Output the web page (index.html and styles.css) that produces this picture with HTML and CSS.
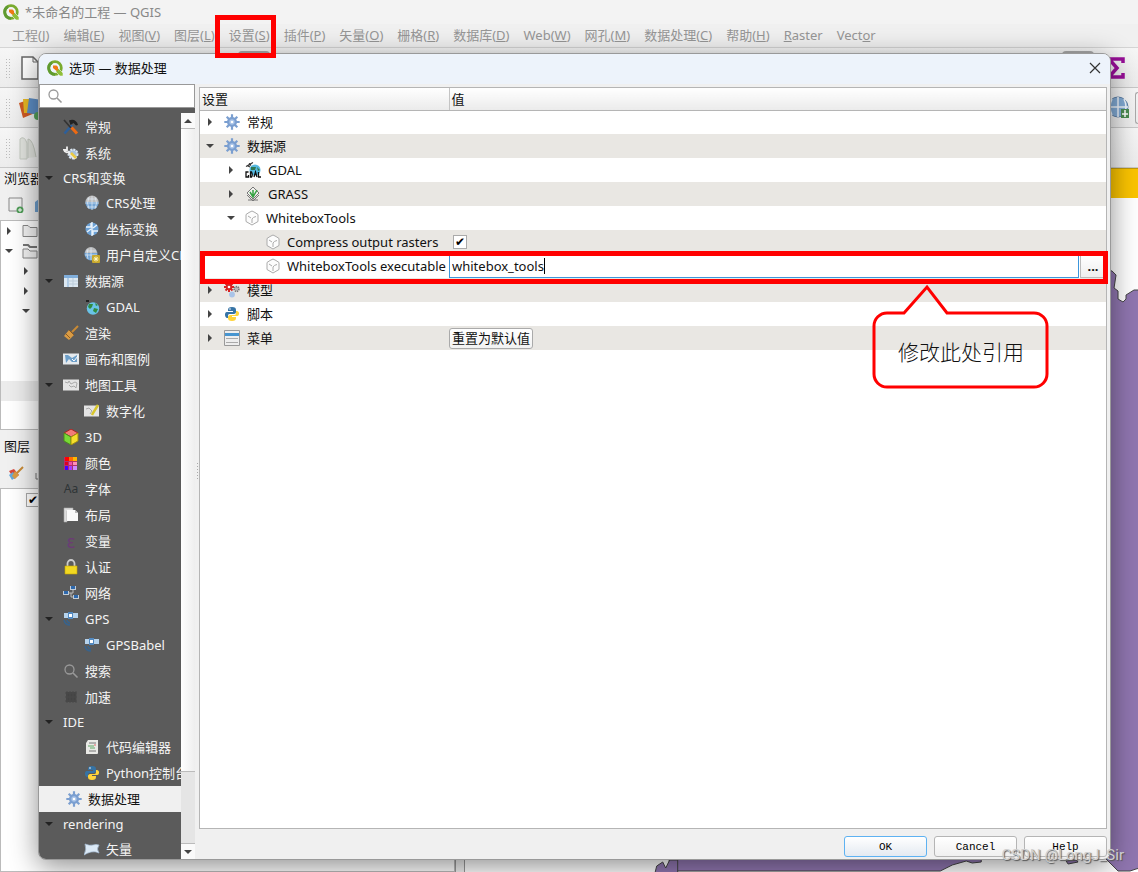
FILE: index.html
```
<!DOCTYPE html>
<html lang="zh-CN">
<head>
    <meta charset="UTF-8">
    <meta name="viewport" content="width=device-width, initial-scale=1.0">
    <title>选项 — 数据处理</title>
    <link rel="stylesheet" href="styles.css">
</head>
<body>
    <!-- shared icons -->
    <svg class="sprite" aria-hidden="true">
        <symbol id="qgis" viewBox="0 0 16 16"><circle cx="8" cy="8" r="6.300" fill="none" stroke="#7aab2e" stroke-width="2.800"/><path d="M8 14.300a6.300 6.300 0 0 1-3-11.800" fill="none" stroke="#5f9a30" stroke-width="2.800"/><path d="M9 9l2.500-.5L16 13v3h-3l-4-4z" fill="#8fbf3a" stroke="#f3f3f3" stroke-width=".6"/><path d="M6 5.500h3.500l1.500 1.500v3.500H9L6 8z" fill="#ee7913"/></symbol>
        <symbol id="down" viewBox="0 0 10 10"><path d="M1 3h8L5 7z" fill="currentColor"/></symbol>
        <symbol id="right" viewBox="0 0 10 10"><path d="M3 1v8l4-4z" fill="currentColor"/></symbol>
        <symbol id="search" viewBox="0 0 16 16"><circle cx="6.500" cy="6.500" r="4.500" fill="none" stroke="#999" stroke-width="1.300"/><path d="M10 10l4.500 4.500" stroke="#999" stroke-width="1.600"/></symbol>
        <symbol id="gear" viewBox="0 0 16 16"><g stroke="#7b9fd0" stroke-width="2.200"><path d="M8 0.300v15.400M0.300 8h15.400M2.700 2.700l10.600 10.600M13.300 2.700L2.700 13.300"/></g><circle cx="8" cy="8" r="5" fill="#7b9fd0"/><circle cx="8" cy="8" r="2.700" fill="#a9c4e8"/><circle cx="8" cy="8" r="1.300" fill="#fff"/></symbol>
        <symbol id="tools" viewBox="0 0 16 16"><path d="M1.500 14.500L9 6" stroke="#2d5f9a" stroke-width="2.600"/><path d="M6 1.500c4-2 8 0 9 4.500l-2 .5-2.500-2.500-3 2z" fill="#222"/><path d="M1 1l7 8" stroke="#333" stroke-width="1.600"/><path d="M8.500 8.500L14 14.500" stroke="#ee6a12" stroke-width="3"/></symbol>
        <symbol id="system" viewBox="0 0 16 16"><circle cx="10" cy="9" r="4.500" fill="#a8c1dc" stroke="#dce6f0" stroke-width="2" stroke-dasharray="2 1"/><path d="M4 1.500v3.500H1q1 3 4 2l7 7" fill="none" stroke="#eee" stroke-width="1.800"/><path d="M8 8l5 5" stroke="#e9c944" stroke-width="2.500"/></symbol>
        <symbol id="globe" viewBox="0 0 16 16"><circle cx="8" cy="8" r="6.500" fill="#74a5d5"/><path d="M1.500 7a6.500 6.500 0 0 1 13 0z" fill="#bdbdbd"/><path d="M1 8h14M3 4h10M3 12h10M8 1v14M5 2q-3 6 0 12M11 2q3 6 0 12" stroke="#e2edf6" stroke-width=".7" fill="none"/></symbol>
        <symbol id="transform" viewBox="0 0 16 16"><circle cx="8" cy="8" r="6.500" fill="#6da2d6"/><path d="M2 6h5V2M9 14v-4h5M8 1v14M3 11l4-3M9 7l4-3" stroke="#e8f2fb" stroke-width="1.400" fill="none"/></symbol>
        <symbol id="customcrs" viewBox="0 0 16 16"><circle cx="7" cy="7" r="6.500" fill="#74a5d5"/><path d="M1 6a6 6 0 0 1 12 0z" fill="#bdbdbd"/><path d="M1 8h12M2 4h10M7 1v12M4 2q-2 5 0 10" stroke="#e2edf6" stroke-width=".7" fill="none"/><rect x="8" y="8" width="8" height="8" rx="1" fill="#c8a92d"/><path d="M12 9.500v5M9.500 12h5M10.300 10.300l3.400 3.400M13.700 10.300l-3.400 3.400" stroke="#fff6bb"/></symbol>
        <symbol id="table" viewBox="0 0 16 16"><path d="M1 2h14v12H1z" fill="#dce8f2"/><path d="M1 2h14v3H1z" fill="#80aedb"/><path d="M5 5v9" stroke="#80aedb"/><path d="M10 5v9M5 8h10M5 11h10" stroke="#bccddb"/></symbol>
        <symbol id="earth" viewBox="0 0 16 16"><circle cx="9" cy="9.500" r="6.200" fill="#69c3e8"/><path d="M5 5l4 0-1 3-2 2-2-2zM10 9l4 1-2 4-3-2zM11 4l3 2-2 1z" fill="#328c3e"/><path d="M2 1h3v2H2z" fill="#222"/></symbol>
        <symbol id="brush" viewBox="0 0 16 16"><path d="M15 1L9 7" stroke="#c88a35" stroke-width="2"/><path d="M6 5l5 5-5 5-5-4z" fill="#d99b44"/><path d="M6 5l5 5M3 9l4 4" stroke="#8d5a20"/></symbol>
        <symbol id="canvas" viewBox="0 0 16 16"><path d="M0 2.500h16v11H0z" fill="#e4e9ed"/><path d="M2 4h3l4 3 5-3v7H9L6 8l-3 4z" fill="#6d9fc9"/><path d="M9 8l2 2 4-5" stroke="#fff" fill="none"/></symbol>
        <symbol id="maptool" viewBox="0 0 16 16"><path d="M0 2.500h16v11H0z" fill="#e4e4e4"/><path d="M2 5l3 1 1-2 2 3 4-2 2 1-1 5-2-2-3 1-2-2" fill="none" stroke="#aaa"/></symbol>
        <symbol id="digitize" viewBox="0 0 16 16"><path d="M0 2.500h15v11H0z" fill="#e4e4e4"/><path d="M2 6l3-1 3 3-2 3" fill="none" stroke="#aaa"/><path d="M14 2l-5 8-1 2" stroke="#d7c62c" stroke-width="2.500"/></symbol>
        <symbol id="cube3d" viewBox="0 0 16 16"><path d="M8 0l7 4-7 4-7-4z" fill="#f27b78" stroke="#a22"/><path d="M1 4l7 4v8l-7-4z" fill="#79d936" stroke="#4a8c1c"/><path d="M15 4L8 8v8l7-4z" fill="#f5df2b" stroke="#a28d10"/></symbol>
        <symbol id="colors" viewBox="0 0 16 16"><path d="M1 2h13v13H1z" fill="#b0306c"/><path d="M2 2h4v4H2z" fill="#f00"/><path d="M6 2h4v4H6z" fill="#ff6d00"/><path d="M10 2h4v4h-4z" fill="#ffb700"/><path d="M2 7h3v3H2z" fill="#d02"/><path d="M6 7h3v3H6z" fill="#f14da8"/><path d="M10 7h4v3h-4z" fill="#ff90b8"/><path d="M2 11h3v4H2z" fill="#40f"/><path d="M6 11h3v4H6z" fill="#a33cff"/><path d="M10 11h4v4h-4z" fill="#cd88ff"/></symbol>
        <symbol id="layout" viewBox="0 0 16 16"><path d="M1 1h9v3H4v11H1z" fill="#ddd" stroke="#aaa" stroke-width=".6"/><path d="M4 3h8l3 3v8H4z" fill="#fafafa"/><path d="M12 3v3h3z" fill="#bbb"/></symbol>
        <symbol id="lock" viewBox="0 0 16 16"><path d="M4.500 8V4.500a3.500 3.500 0 0 1 7 0V8" fill="none" stroke="#ccc" stroke-width="1.800"/><path d="M2 7h12v8H2z" fill="#f1d821" stroke="#caa900" stroke-width=".6"/></symbol>
        <symbol id="network" viewBox="0 0 16 16"><path d="M5 8h5V5M8 8v4h3" fill="none" stroke="#bbb"/><path d="M0 6h6v4H0zM7 1h6v4H7zM10 10h6v4h-6z" fill="#c2ccd6"/><path d="M1 6h4v3H1zM8 1h4v3H8zM11 10h4v3h-4z" fill="#2e69ad"/></symbol>
        <symbol id="gps" viewBox="0 0 16 16"><path d="M1 2h4v5H1zM9 2h6v5H9z" fill="#b6d3ed"/><path d="M5 1h5v7H5z" fill="#5288be"/><path d="M6 3h3v3H6z" fill="#fff"/><path d="M4 9q0 2 3 3M1 9q1 5 6 5" fill="none" stroke="#38638c" stroke-width="1.600"/></symbol>
        <symbol id="chip" viewBox="0 0 16 16"><path d="M3 3h10v10H3z" fill="#444"/><path d="M4 2v12M7 2v12M10 2v12M13 2v12M2 4h12M2 8h12M2 12h12" stroke="#4b4b4b"/></symbol>
        <symbol id="code" viewBox="0 0 16 16"><path d="M4 1h10v13q0 1-1 1H2V4z" fill="#e9e9e6"/><path d="M5 4h7M5 12h7" stroke="#777"/><path d="M4 7h6M6 9h5" stroke="#5ea764"/><path d="M10 6h2" stroke="#d66"/></symbol>
        <symbol id="python" viewBox="0 0 16 16"><path d="M8 1c-3 0-4 1-4 3v1h5v1H3C1 6 1 8 1 9s1 3 2 3h1v-2c0-2 1-2 3-2h3c1 0 2-1 2-2V4c0-2-1-3-4-3z" fill="#3673a5"/><path d="M8 15c3 0 4-1 4-3v-1H8v-1h5c2 0 2-2 2-3s-1-2-2-2h-1v2c0 2-1 2-3 2H6c-1 0-2 1-2 2v1c0 2 1 3 4 3z" fill="#ffd43b"/><circle cx="6" cy="3" r=".8" fill="#fff"/></symbol>
        <symbol id="vector" viewBox="0 0 16 16"><path d="M1 3q5 2 8 1t6 0q-3 4 0 8-4-2-8-1t-7 3q3-6 1-11z" fill="#dbe9f6" stroke="#a9c0d8" stroke-width=".7"/></symbol>
        <symbol id="gdal" viewBox="0 0 16 16"><circle cx="10" cy="8" r="5.500" fill="#55b8df"/><path d="M6 5l5 0-1 3H6zM12 5l3 3-2 1z" fill="#2e7650"/><path d="M1 4.500L8 .5M3 4l2 1M4 1.500l2 2" stroke="#333" stroke-width="1.200"/><path d="M3.500 10H1v5h2.500v-2M5.500 10v5h1q1.500-2 0-5zM9 15l1.500-5 1.500 5M13.500 10v5H16" fill="none" stroke="#111" stroke-width="1.300"/></symbol>
        <symbol id="grass" viewBox="0 0 16 16"><path d="M8 1l6 6-6 6-6-6z" fill="#f1f1ee" stroke="#777"/><path d="M2 9l6 6 6-6M3 14h10" fill="none" stroke="#777"/><path d="M5 6l3 5 4-7M8 4v7" fill="none" stroke="#35a143" stroke-width="1.500"/></symbol>
        <symbol id="box" viewBox="0 0 14 16"><path d="M4 2.500L7 1l3 1.500 3 2v7l-6 3.500-6-3.500v-7zM3 6l3 2M7 13V9q1-2 4-2.500" fill="#fcfcfc" stroke="#aaa"/></symbol>
        <symbol id="model" viewBox="0 0 16 16"><path d="M5 0v10M0 5h10M1.500 1.500l7 7M8.500 1.500l-7 7" stroke="#d62222" stroke-width="2"/><circle cx="5" cy="5" r="3.200" fill="#d62222"/><circle cx="5" cy="5" r="1.300" fill="#fff"/><circle cx="12.500" cy="7" r="2.400" fill="#bbb" stroke="#777" stroke-width="1.600" stroke-dasharray="1.200 .7"/><circle cx="8" cy="12.500" r="2.900" fill="#a9c4e8"/></symbol>
        <symbol id="menu" viewBox="0 0 16 16"><path d="M.5.500h15v15H.5z" fill="#eee" stroke="#999"/><path d="M1 3h14v3H1z" fill="#4795d0"/><path d="M2 8.500h12M2 12.500h12" stroke="#aaa"/></symbol>
        <symbol id="folder" viewBox="0 0 16 16"><path d="M1 2.500h5l2 2h7v9H1z" fill="#f4f4f4" stroke="#888"/></symbol>
        <symbol id="folders" viewBox="0 0 16 16"><path d="M1 2h5l2 2h7" fill="none" stroke="#777" stroke-width="2"/><path d="M1 6h5l2 2h7v7H1z" fill="#f4f4f4" stroke="#888"/></symbol>
    </svg>

    <div class="window">
        <header class="titlebar"><svg class="logo"><use href="#qgis"/></svg>*未命名的工程 — QGIS</header>
        <nav class="menubar">
            <button>工程(<u>J</u>)</button>
            <button>编辑(<u>E</u>)</button>
            <button>视图(<u>V</u>)</button>
            <button>图层(<u>L</u>)</button>
            <button>设置(<u>S</u>)</button>
            <button>插件(<u>P</u>)</button>
            <button>矢量(<u>O</u>)</button>
            <button>栅格(<u>R</u>)</button>
            <button>数据库(<u>D</u>)</button>
            <button>Web(<u>W</u>)</button>
            <button>网孔(<u>M</u>)</button>
            <button>数据处理(<u>C</u>)</button>
            <button>帮助(<u>H</u>)</button>
            <button><u>R</u>aster</button>
            <button>Vect<u>o</u>r</button>
        </nav>
        <div class="toolbar">
            <span class="grip"></span>
            <svg class="tool" viewBox="0 0 24 24"><path d="M4 1h11l5 5v17H4z" fill="#fff" stroke="#666" stroke-width="1.500"/><path d="M15 1v5h5" fill="none" stroke="#666"/></svg>
            <span class="pressed first"></span>
            <span class="pressed last"></span>
            <svg class="tool sum" viewBox="0 0 24 24"><path d="M21 7V3H7l8 9-8 9h14v-4" fill="none" stroke="#990f99" stroke-width="3.500"/></svg>
        </div>
        <div class="toolbar">
            <span class="grip"></span>
            <svg class="tool" viewBox="0 0 24 24"><path d="M1 7l12-4 4 14-12 5z" fill="#cf5a24"/><path d="M5 3h13v14H6z" fill="#e7b925"/><path d="M11 2l13 2-2 15-13-2z" fill="#5e8fc7"/><circle cx="20" cy="20" r="4" fill="#55a35c"/></svg>
            <svg class="tool web" viewBox="0 0 24 24"><circle cx="11" cy="11" r="10" fill="#82abd5" stroke="#5e80a7"/><path d="M1 11h20M11 1v20M5 3q-4 8 0 16M17 3q4 8 0 16" stroke="#eef5fb" fill="none" stroke-width="1.500"/><path d="M14 13h8v9h-8z" fill="#4b8b52"/><path d="M18 14v7M15 18h6" stroke="#fff" stroke-width="1.500"/></svg>
            <span class="edge"></span>
        </div>
        <div class="toolbar">
            <span class="grip"></span>
            <svg class="tool" viewBox="0 0 24 24"><path d="M2 23V3q4-4 7 4v16zM10 22V3q5 0 8 18" fill="#e2e4df" stroke="#c5cac1"/></svg>
        </div>
        <div class="workspace">
            <aside class="docks">
                <h2>浏览器</h2>
                <div class="dock-tools">
                    <svg class="icon" viewBox="0 0 16 16"><path d="M1 1h13v13H1z" fill="none" stroke="#888"/><circle cx="12" cy="13" r="3.500" fill="#4f9c57"/><path d="M12 11v4M10 13h4" stroke="#fff"/></svg>
                    <svg class="icon" viewBox="0 0 16 16"><path d="M0 8q1-7 9-6M0 5l4-3v13H0z" fill="#6e9fce"/></svg>
                </div>
                <ul class="browser">
                    <li><svg class="caret"><use href="#right"/></svg><svg class="icon"><use href="#folder"/></svg></li>
                    <li><svg class="caret"><use href="#down"/></svg><svg class="icon"><use href="#folders"/></svg></li>
                    <li class="child"><svg class="caret"><use href="#right"/></svg></li>
                    <li class="child"><svg class="caret"><use href="#right"/></svg></li>
                    <li class="child"><svg class="caret"><use href="#down"/></svg></li>
                    <li></li><li></li><li></li>
                    <li class="current"></li>
                </ul>
                <h2>图层</h2>
                <div class="dock-tools">
                    <svg class="icon" viewBox="0 0 16 16"><path d="M1 6l5-2 5 6-5 4z" fill="#d8483b"/><path d="M1 10l4-3 3 5-4 3z" fill="#66a8da"/><path d="M15 2L9 8" stroke="#c88a35" stroke-width="2"/><path d="M7 6l4 4-4 4-3-3z" fill="#d99b44"/></svg>
                    <svg class="icon" viewBox="0 0 16 16"><path d="M1 8v6h8" fill="none" stroke="#777"/></svg>
                </div>
                <div class="layers"><input type="checkbox" aria-label="图层可见" checked></div>
            </aside>
            <main class="map">
                <div class="message"></div>
                <svg viewBox="464 198 674 674" preserveAspectRatio="none">
                    <path d="M1000 270h108l4 1 4 4-2 13 4 3v8l5 3 3-3v-4l8-5h6v578l-4 1-6 2h-12l-5-5-8-8-20-12H981v16l-9 1-6-2-14 4-12 6H672l-3-6-2-18h333z" fill="#9076b0" stroke="#444"/>
                    <path d="M654 874l2-8 6-4 3 6 4-8h8v14z" fill="#9076b0" stroke="#444"/>
                    <path d="M1066 861l10-1 2 2-10 2z" fill="#9076b0" stroke="#444"/>
                </svg>
            </main>
        </div>
    </div>

    <section class="dialog" role="dialog" aria-labelledby="dialog-title">
        <header class="dialog-title">
            <svg class="logo"><use href="#qgis"/></svg>
            <h1 id="dialog-title">选项 — 数据处理</h1>
            <button class="close" aria-label="关闭"><svg class="icon" viewBox="0 0 16 16"><path d="M3 3l10 10M13 3L3 13" stroke="#333" stroke-width="1.200"/></svg></button>
        </header>
        <div class="dialog-body">
            <div class="sidebar">
                <div class="search"><svg class="icon"><use href="#search"/></svg><input type="text" aria-label="搜索"></div>
                <div class="list">
                    <ul class="pages">
                        <li><svg class="icon"><use href="#tools"/></svg>常规</li>
                        <li><svg class="icon"><use href="#system"/></svg>系统</li>
                        <li class="group"><svg class="caret"><use href="#down"/></svg>CRS和变换</li>
                        <li class="child"><svg class="icon"><use href="#globe"/></svg>CRS处理</li>
                        <li class="child"><svg class="icon"><use href="#transform"/></svg>坐标变换</li>
                        <li class="child"><svg class="icon"><use href="#customcrs"/></svg>用户自定义CRS</li>
                        <li class="parent"><svg class="caret"><use href="#down"/></svg><svg class="icon"><use href="#table"/></svg>数据源</li>
                        <li class="child"><svg class="icon"><use href="#earth"/></svg>GDAL</li>
                        <li><svg class="icon"><use href="#brush"/></svg>渲染</li>
                        <li><svg class="icon"><use href="#canvas"/></svg>画布和图例</li>
                        <li class="parent"><svg class="caret"><use href="#down"/></svg><svg class="icon"><use href="#maptool"/></svg>地图工具</li>
                        <li class="child"><svg class="icon"><use href="#digitize"/></svg>数字化</li>
                        <li><svg class="icon"><use href="#cube3d"/></svg>3D</li>
                        <li><svg class="icon"><use href="#colors"/></svg>颜色</li>
                        <li><span class="glyph">Aa</span>字体</li>
                        <li><svg class="icon"><use href="#layout"/></svg>布局</li>
                        <li><span class="glyph epsilon">ε</span>变量</li>
                        <li><svg class="icon"><use href="#lock"/></svg>认证</li>
                        <li><svg class="icon"><use href="#network"/></svg>网络</li>
                        <li class="parent"><svg class="caret"><use href="#down"/></svg><svg class="icon"><use href="#gps"/></svg>GPS</li>
                        <li class="child"><svg class="icon"><use href="#gps"/></svg>GPSBabel</li>
                        <li><svg class="icon"><use href="#search"/></svg>搜索</li>
                        <li><svg class="icon"><use href="#chip"/></svg>加速</li>
                        <li class="group"><svg class="caret"><use href="#down"/></svg>IDE</li>
                        <li class="child"><svg class="icon"><use href="#code"/></svg>代码编辑器</li>
                        <li class="child"><svg class="icon"><use href="#python"/></svg>Python控制台</li>
                        <li class="selected"><svg class="icon"><use href="#gear"/></svg>数据处理</li>
                        <li class="group"><svg class="caret"><use href="#down"/></svg>rendering</li>
                        <li class="child"><svg class="icon"><use href="#vector"/></svg>矢量</li>
                    </ul>
                    <div class="scrollbar">
                        <button aria-label="向上"><svg class="caret up"><use href="#down"/></svg></button>
                        <span class="thumb"></span>
                        <span class="track"></span>
                        <button aria-label="向下"><svg class="caret"><use href="#down"/></svg></button>
                    </div>
                </div>
            </div>
            <div class="splitter"></div>
            <div class="content">
                <div class="tree">
                    <table>
                        <thead>
                            <tr><th class="name">设置</th><th>值</th></tr>
                        </thead>
                        <tbody>
                            <tr><td><div class="item"><svg class="caret"><use href="#right"/></svg><svg class="icon"><use href="#gear"/></svg>常规</div></td><td></td></tr>
                            <tr><td><div class="item"><svg class="caret"><use href="#down"/></svg><svg class="icon"><use href="#gear"/></svg>数据源</div></td><td></td></tr>
                            <tr><td><div class="item level2"><svg class="caret"><use href="#right"/></svg><svg class="icon"><use href="#gdal"/></svg>GDAL</div></td><td></td></tr>
                            <tr><td><div class="item level2"><svg class="caret"><use href="#right"/></svg><svg class="icon"><use href="#grass"/></svg>GRASS</div></td><td></td></tr>
                            <tr><td><div class="item level2"><svg class="caret"><use href="#down"/></svg><svg class="icon box"><use href="#box"/></svg>WhiteboxTools</div></td><td></td></tr>
                            <tr><td><div class="item level3"><svg class="icon box"><use href="#box"/></svg><label for="compress">Compress output rasters</label></div></td><td><input type="checkbox" id="compress" checked></td></tr>
                            <tr><td><div class="item level3"><svg class="icon box"><use href="#box"/></svg><label for="executable">WhiteboxTools executable</label></div></td><td><div class="path"><input type="text" id="executable" value="whitebox_tools"><button>...</button></div></td></tr>
                            <tr><td><div class="item"><svg class="caret"><use href="#right"/></svg><svg class="icon"><use href="#model"/></svg>模型</div></td><td></td></tr>
                            <tr><td><div class="item"><svg class="caret"><use href="#right"/></svg><svg class="icon"><use href="#python"/></svg>脚本</div></td><td></td></tr>
                            <tr><td><div class="item"><svg class="caret"><use href="#right"/></svg><svg class="icon"><use href="#menu"/></svg>菜单</div></td><td><button class="reset">重置为默认值</button></td></tr>
                        </tbody>
                    </table>
                </div>
                <div class="actions">
                    <button class="default">OK</button>
                    <button>Cancel</button>
                    <button>Help</button>
                </div>
            </div>
        </div>
    </section>

    <!-- annotations -->
    <div class="mark mark-menu"></div>
    <div class="mark mark-row"></div>
    <div class="callout">
        <svg viewBox="0 0 178 106"><path d="M32 29L55 3l20 26h87a13 13 0 0 1 13 13v48a13 13 0 0 1-13 13H15A13 13 0 0 1 2 90V42a13 13 0 0 1 13-13z" fill="none" stroke="#f00" stroke-width="3"/></svg>
        <p>修改此处引用</p>
    </div>
    <div class="watermark">CSDN @LongJ_Sir</div>
</body>
</html>
```
FILE: styles.css
```
* {
    box-sizing: border-box;
}
body {
    margin: 0;
    height: 100vh;
    overflow: hidden;
    position: relative;
    font-family: "Noto Sans", "Noto Sans CJK SC", sans-serif;
    font-size: 13px;
    line-height: 20px;
    color: #111;
}
button, input {
    font: inherit;
    color: inherit;
    margin: 0;
    padding: 0;
}
ul {
    list-style: none;
    margin: 0;
    padding: 0;
}
h1, h2 {
    margin: 0;
    font-size: 13px;
    font-weight: normal;
}
svg {
    flex: none;
    display: block;
}
.sprite {
    display: none;
}
.icon {
    width: 16px;
    height: 16px;
}
.caret {
    width: 10px;
    height: 10px;
    color: #444;
}
.logo {
    width: 16px;
    height: 16px;
}

/* main window */
.window {
    height: 100%;
    display: flex;
    flex-direction: column;
    background: #f0f0f0;
}
.titlebar {
    display: flex;
    align-items: center;
    gap: 6px;
    height: 24px;
    padding-left: 3px;
    background: #f3f3f3;
    color: #888;
}
.menubar {
    display: flex;
    gap: 14px;
    height: 24px;
    padding: 0 0 1px 12px;
    border-bottom: 1px solid #d5d5d5;
    color: #969696;
}
.menubar button {
    border: none;
    background: none;
    white-space: nowrap;
}
.toolbar {
    display: flex;
    align-items: center;
    gap: 8px;
    height: 40px;
    padding-left: 5px;
    border-bottom: 1px solid #c8c8c8;
    background: linear-gradient(#f6f6f6, #ececec);
}
.grip {
    width: 5px;
    height: 20px;
    background: radial-gradient(circle, #bbb 1px, transparent 1px) 0 0 / 3px 3px;
}
.tool {
    width: 24px;
    height: 24px;
}
.pressed {
    width: 32px;
    height: 34px;
    border-radius: 4px;
    background: #aaa;
}
.pressed.first {
    margin-left: 188px;
}
.pressed.last {
    margin-left: auto;
}
.sum {
    margin-right: 12px;
}
.web {
    margin-left: auto;
}
.edge {
    width: 3px;
    height: 32px;
    margin-left: -4px;
    border: 1px solid #aaa;
    border-right: none;
    border-radius: 4px 0 0 4px;
}
.workspace {
    flex: 1;
    min-height: 0;
    display: flex;
    gap: 8px;
}
.docks {
    width: 456px;
    display: flex;
    flex-direction: column;
    border-right: 1px solid #999;
}
.docks h2 {
    padding: 0 4px 3px;
}
.dock-tools {
    display: flex;
    align-items: center;
    gap: 11px;
    height: 29px;
    padding: 0 0 2px 8px;
}
.browser {
    height: 210px;
    margin-bottom: 6px;
    border: 1px solid #bbb;
    background: #fff;
}
.browser li {
    display: flex;
    align-items: center;
    gap: 8px;
    height: 20px;
    padding-left: 3px;
}
.browser .child {
    padding-left: 20px;
}
.browser .current {
    background: #ececec;
}
.layers {
    flex: 1;
    padding: 4px 25px;
    border: 1px solid #bbb;
    background: #fff;
}
.map {
    flex: 1;
    display: flex;
    flex-direction: column;
    border-left: 1px solid #999;
    background: #fff;
}
.message {
    height: 30px;
    border-top: 1px solid #c19a0a;
    background: #fbc400;
}
.map svg {
    width: 100%;
    flex: 1;
    min-height: 0;
}

input[type="checkbox"] {
    appearance: none;
    display: block;
    width: 14px;
    height: 14px;
    border: 1px solid #aaa;
    background: #fff;
}
input[type="checkbox"]:checked::before {
    content: "✔";
    display: block;
    font: 12px/12px "DejaVu Sans", sans-serif;
    color: #000;
    text-align: center;
}

/* options dialog */
.dialog {
    position: absolute;
    top: 53px;
    right: 27px;
    bottom: 12px;
    left: 38px;
    display: flex;
    flex-direction: column;
    overflow: hidden;
    border: 1px solid #999;
    border-radius: 8px;
    background: #f0f0f0;
    box-shadow: 0 6px 28px rgba(0, 0, 0, 0.45);
}
.dialog-title {
    display: flex;
    align-items: center;
    gap: 6px;
    height: 30px;
    padding: 0 7px 2px 8px;
    background: #edf3fb;
}
.close {
    margin-left: auto;
    border: none;
    background: none;
}
.dialog-body {
    flex: 1;
    min-height: 0;
    display: flex;
}
.sidebar {
    width: 156px;
    display: flex;
    flex-direction: column;
}
.search {
    display: flex;
    align-items: center;
    gap: 6px;
    height: 24px;
    padding-left: 7px;
    border: 1px solid #999;
    background: #fff;
}
.search input {
    flex: 1;
    min-width: 0;
    border: none;
    outline: none;
}
.list {
    flex: 1;
    min-height: 0;
    display: flex;
    background: #5b5b5b;
}
.pages {
    flex: 1;
    min-width: 0;
    padding-top: 6px;
    overflow: hidden;
    color: #f4f4f4;
}
.pages li {
    display: flex;
    align-items: center;
    gap: 6px;
    height: 26px;
    padding: 0 0 1px 24px;
    white-space: nowrap;
}
.pages .child {
    padding-left: 45px;
}
.pages .parent, .pages .group {
    padding-left: 5px;
}
.pages .group {
    height: 24px;
}
.pages .selected {
    padding-left: 27px;
    background: #f0f0f0;
    color: #111;
}
.pages .caret {
    margin-right: 3px;
    color: #222;
}
.glyph {
    width: 16px;
    font-size: 12px;
    color: #2e3436;
    text-align: center;
}
.epsilon {
    font-size: 18px;
    color: #6b3c75;
}
.scrollbar {
    width: 14px;
    margin-top: 5px;
    display: flex;
    flex-direction: column;
    background: #e5e5e5;
}
.scrollbar button {
    height: 15px;
    padding: 0 2px;
    border: none;
    background: #fafafa;
}
.up {
    transform: rotate(180deg);
}
.thumb {
    flex: 9;
    border: solid #bbb;
    border-width: 1px 0;
    background: linear-gradient(to right, #fff, #eee);
}
.track {
    flex: 1;
    border-bottom: 1px solid #bbb;
}
.splitter {
    width: 4px;
    background: repeating-linear-gradient(#aaa 0 1px, transparent 1px 3px) center / 1px 18px no-repeat;
}
.content {
    flex: 1;
    min-width: 0;
    display: flex;
    flex-direction: column;
    gap: 7px;
    padding: 3px 3px 2px 0;
}
.tree {
    flex: 1;
    min-height: 0;
    border: 1px solid #b5b5b5;
    background: #fff;
}
table {
    width: 100%;
    table-layout: fixed;
    border-collapse: collapse;
}
th {
    height: 22px;
    padding: 0 2px;
    border-bottom: 1px solid #b5b5b5;
    background: linear-gradient(#fff, #ebebeb);
    font-weight: normal;
    text-align: left;
}
th.name {
    width: 249px;
    border-right: 1px solid #c4c4c4;
}
td {
    height: 24px;
    padding: 0;
}
tbody tr:nth-child(even) {
    background: #e9e7e3;
}
.item {
    display: flex;
    align-items: center;
    gap: 7px;
    padding-left: 5px;
    white-space: nowrap;
}
.item .caret {
    margin-right: 2px;
}
.level2 {
    padding-left: 26px;
}
.level3 {
    padding-left: 66px;
}
.item .box {
    width: 14px;
}
td input[type="checkbox"] {
    margin-left: 4px;
}
.path {
    display: flex;
    gap: 1px;
}
/* the thin gradient is the text cursor after the value */
.path input {
    flex: 1;
    min-width: 0;
    height: 24px;
    padding: 0 2px;
    border: 1px solid #3c96dc;
    outline: none;
    background: #fff linear-gradient(#000, #000) 94px center / 1px 16px no-repeat;
}
.path button {
    width: 26px;
    border: 1px solid #bbb;
    background: linear-gradient(#fff, #eee);
    font-weight: bold;
}
.reset {
    display: block;
    height: 21px;
    padding: 0 2px;
    border: 1px solid #aaa;
    border-radius: 3px;
    background: linear-gradient(#fff, #f2f2f2);
    line-height: 18px;
}
.actions {
    display: flex;
    justify-content: flex-end;
    gap: 7px;
}
.actions button {
    width: 83px;
    height: 21px;
    border: 1px solid #b5b5b5;
    border-radius: 3px;
    background: linear-gradient(#fff, #f0f0f0);
    font: 11px "Liberation Mono", monospace;
    color: #000;
}
.actions .default {
    border-color: #5eb2f2;
    background: linear-gradient(#fff, #e4eaf1);
}

/* annotations */
.mark {
    position: absolute;
    border: 5px solid #f00;
}
.mark-menu {
    top: 15px;
    left: 215px;
    width: 61px;
    height: 43px;
}
.mark-row {
    top: 251px;
    right: 30px;
    left: 200px;
    height: 33px;
}
.callout {
    position: absolute;
    top: 284px;
    right: 88px;
    width: 178px;
}
.callout p {
    position: absolute;
    top: 54px;
    width: 100%;
    margin: 0;
    font-size: 21px;
    line-height: 28px;
    font-weight: 300;
    text-align: center;
}
.watermark {
    position: absolute;
    right: 14px;
    bottom: 7px;
    font: 15px/20px Roboto, sans-serif;
    color: #d0d0d0;
    text-shadow: 1px 1px 1px #555;
}
```
